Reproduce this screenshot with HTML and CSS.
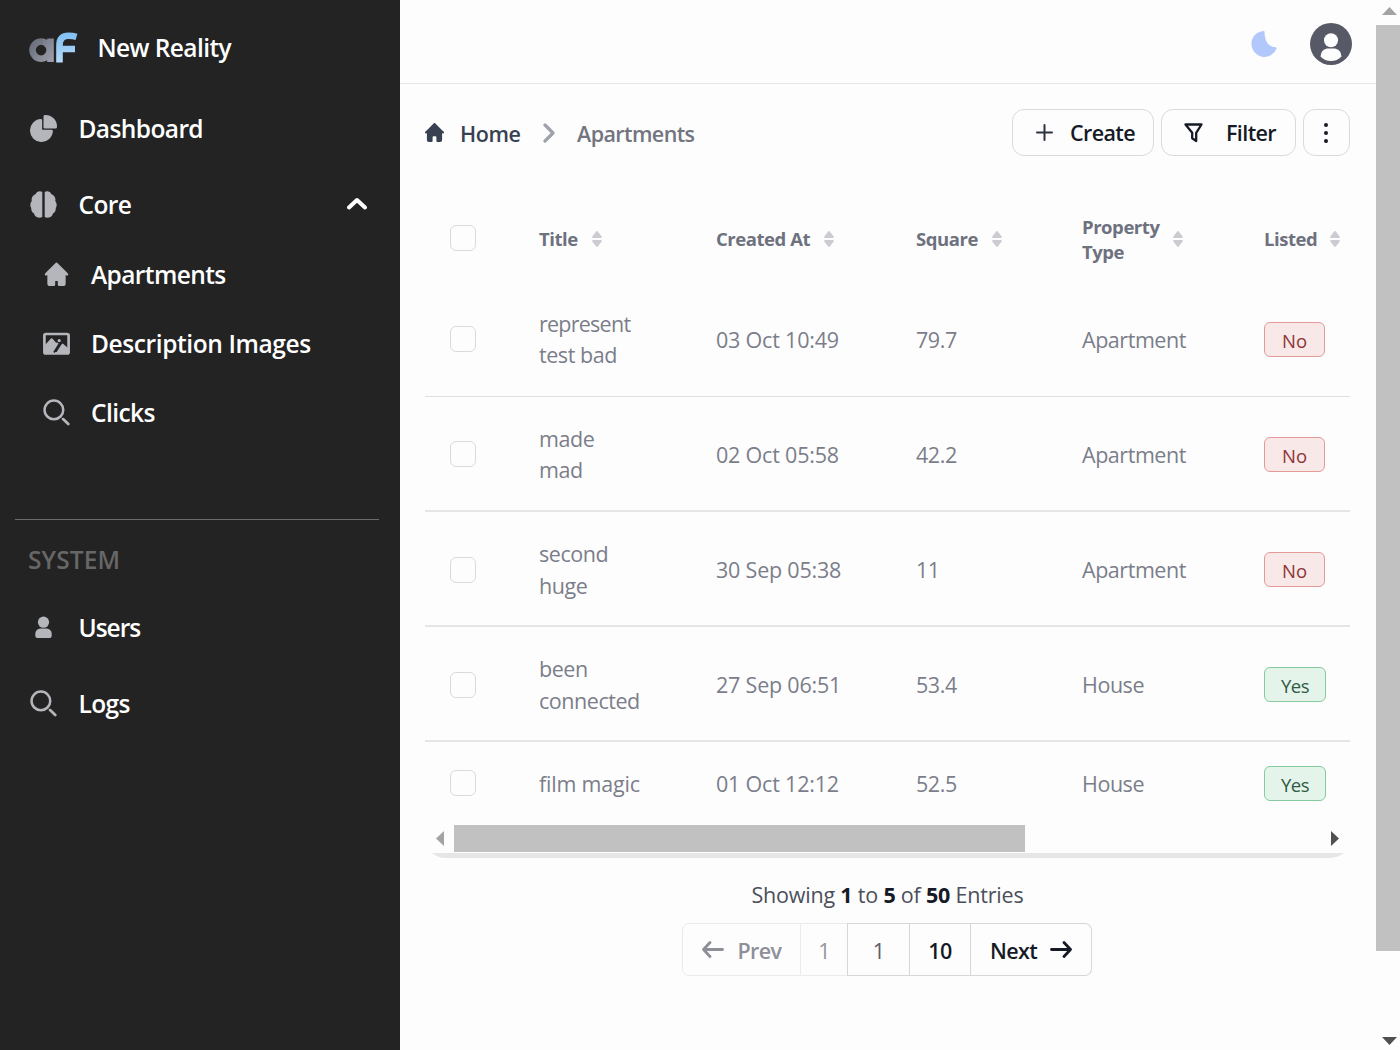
FILE: index.html
```html
<!DOCTYPE html>
<html lang="en">
<head>
<meta charset="utf-8">
<title>Apartments</title>
<link rel="stylesheet" href="styles.css">
</head>
<body>
<svg class="sprite" width="0" height="0">
  <symbol id="search" viewBox="0 0 28 28"><circle cx="11.3" cy="11.3" r="9.7" fill="none" stroke="currentColor" stroke-width="2.600"/><path d="M20.8 20.8l5.4 5.2" stroke="currentColor" stroke-width="2.800" stroke-linecap="round"/></symbol>
  <symbol id="home" viewBox="0 0 20 20"><path fill="currentColor" d="m19.707 9.293-2-2-7-7a1 1 0 0 0-1.414 0l-7 7-2 2a1 1 0 0 0 1.414 1.414L2 10.414V18a2 2 0 0 0 2 2h3a1 1 0 0 0 1-1v-4a1 1 0 0 1 1-1h2a1 1 0 0 1 1 1v4a1 1 0 0 0 1 1h3a2 2 0 0 0 2-2v-7.586l.293.293a1 1 0 0 0 1.414-1.414Z"/></symbol>
  <symbol id="sort" viewBox="0 0 10 16"><path fill="currentColor" d="M1 7a.9.9 0 0 1-.7-1.4L4.2.5a1 1 0 0 1 1.6 0l3.9 5.1A.9.9 0 0 1 9 7ZM1 9h8a.9.9 0 0 1 .7 1.4l-3.9 5.1a1 1 0 0 1-1.6 0L.3 10.400A.9.9 0 0 1 1 9Z"/></symbol>
</svg>
<div class="app">
  <aside class="sidebar">
    <div class="brand">
      <svg class="logo" width="50" height="32" viewBox="0 0 50 32">
        <defs>
          <linearGradient id="gray" x1="0" y1="0" x2="1" y2="1"><stop offset="0" stop-color="#676c7b"/><stop offset="1" stop-color="#9a9ca8"/></linearGradient>
          <linearGradient id="blue" x1="0" y1="0" x2="0" y2="1"><stop offset="0" stop-color="#85c1f3"/><stop offset="1" stop-color="#b5dbf8"/></linearGradient>
        </defs>
        <path d="M13 10.500a8.500 8.600 0 1 0 .1 0M22.500 7.500v23.500" fill="none" stroke="url(#gray)" stroke-width="6.600"/>
        <path d="M31.500 31.500V14Q31.500 4.800 40.500 4.800Q45 4.800 48.500 5.800M31.500 18H47" fill="none" stroke="url(#blue)" stroke-width="6.600"/>
      </svg>
      <span>New Reality</span>
    </div>
    <nav>
      <a class="item"><svg class="ico" viewBox="2 2 20 20"><path fill="currentColor" d="M13.500 2c-.178 0-.356.013-.492.022l-.074.005a1 1 0 0 0-.934.998V11a1 1 0 0 0 1 1h7.975a1 1 0 0 0 .998-.934l.005-.074A7.040 7.040 0 0 0 22 10.500 8.500 8.500 0 0 0 13.500 2ZM11 6.025a1 1 0 0 0-1.065-.998 8.500 8.500 0 1 0 9.038 9.039A1 1 0 0 0 17.975 13H11V6.025Z"/></svg><span>Dashboard</span></a>
      <a class="item"><svg class="ico" viewBox="0 0 27 27"><path fill="currentColor" d="M12.300 1Q11 .2 9.500.3Q6.500.6 5.700 3Q3.300 3.800 2.200 6Q1.200 8 1.700 10Q.2 12 .3 14Q.4 16 1.200 17Q1 20.500 4 22.500Q5 26.500 9 26.700Q11 26.800 12.300 26ZM14.700 1Q16 .2 17.500.3Q20.500.6 21.300 3Q23.700 3.800 24.800 6Q25.800 8 25.300 10Q26.800 12 26.700 14Q26.600 16 25.800 17Q26 20.500 23 22.500Q22 26.500 18 26.700Q16 26.800 14.700 26Z"/></svg><span>Core</span>
        <svg class="caret" width="20" height="13" viewBox="0 0 20 13"><path d="M2 10.500 10 3l8 7.500" fill="none" stroke="#fff" stroke-width="4" stroke-linecap="round" stroke-linejoin="round"/></svg></a>
      <div class="sub">
        <a class="item"><svg class="ico" viewBox="2.700 2.300 18.600 18.600"><path fill="currentColor" d="M11.293 3.293a1 1 0 0 1 1.414 0l6 6 2 2a1 1 0 0 1-1.414 1.414L19 12.414V19a2 2 0 0 1-2 2h-3a1 1 0 0 1-1-1v-3h-2v3a1 1 0 0 1-1 1H7a2 2 0 0 1-2-2v-6.586l-.293.293a1 1 0 0 1-1.414-1.414l2-2 6-6Z" transform="translate(1.200 .700) scale(.9)"/></svg><span>Apartments</span></a>
        <a class="item"><svg class="ico" viewBox="0 0 27 27"><rect x="1.400" y="4" width="24.200" height="19.400" rx="1.500" fill="none" stroke="currentColor" stroke-width="2.700"/><path fill="currentColor" d="M2 15 8.200 8.300Q9 8 9.600 8.700L13.500 13.300 9.800 23H2ZM13 23 18.600 14.300 19.800 13.500 25 18V23Z"/><path d="M9 23 15 13" stroke="currentColor" stroke-width="3"/><circle cx="16.200" cy="10.600" r="1.600" fill="currentColor"/><path d="M11 22.500 16.700 13.200" stroke="#232323" stroke-width="1.800"/></svg><span class="desc">Description Images</span></a>
        <a class="item"><svg class="ico"><use href="#search"/></svg><span>Clicks</span></a>
      </div>
    </nav>
    <div class="system">SYSTEM</div>
    <nav>
      <a class="item"><svg class="ico" viewBox="0 0 27 27"><circle cx="13.500" cy="8.200" r="5.600" fill="currentColor"/><path fill="currentColor" d="M10.500 14.500h6Q21.700 15 21.700 20v2q0 2-2 2H7.300q-2 0-2-2v-2q0-5 5.200-5.500Z"/></svg><span class="tight">Users</span></a>
      <a class="item"><svg class="ico"><use href="#search"/></svg><span>Logs</span></a>
    </nav>
  </aside>

  <main class="main">
    <header class="topbar">
      <svg width="26" height="26" viewBox="0 0 26 26"><path fill="#b2c8fa" d="M12.300 0Q13.600-.1 13.600 1.300C13.600 11 18 16 24.600 16.200Q26 16.400 25.600 17.500A13 13 0 1 1 12.300 0Z"/></svg>
      <svg width="42" height="42" viewBox="0 0 42 42"><circle cx="21" cy="21" r="21" fill="#575966"/><circle cx="21" cy="17.200" r="7" fill="#fdfdfd"/><path fill="#fdfdfd" d="M17 25.500h8Q31 26.500 31.500 33.500Q27 38 21 38T10.500 33.500Q11 26.500 17 25.500Z"/></svg>
    </header>

    <section class="content">
      <div class="toolbar">
        <div class="crumbs">
          <svg width="19" height="19"><use href="#home"/></svg>
          <span class="home">Home</span>
          <svg width="12" height="20" viewBox="0 0 12 20"><path d="M2 2l8 8-8 8" fill="none" stroke="#9fa2ad" stroke-width="3.200" stroke-linecap="round" stroke-linejoin="round"/></svg>
          <span class="here">Apartments</span>
        </div>
        <div class="actions">
          <button class="btn create"><svg width="17" height="17" viewBox="0 0 17 17"><path d="M8.500 1v15M1 8.500h15" stroke="#2d3340" stroke-width="2" stroke-linecap="round"/></svg><span>Create</span></button>
          <button class="btn filter"><svg width="19" height="20" viewBox="0 0 19 20"><path d="M1.500 1.500h16l-5.300 8.300v8.200l-4-2.700V9.800Z" fill="none" stroke="#161a26" stroke-width="2.300" stroke-linejoin="round"/></svg><span>Filter</span></button>
          <button class="btn more"><svg width="4" height="20" viewBox="0 0 4 20"><path d="M2 2v.01M2 10v.01M2 18v.01" stroke="#161a26" stroke-width="4" stroke-linecap="round"/></svg></button>
        </div>
      </div>

      <table class="grid">
        <colgroup><col class="c1"><col class="c2"><col class="c3"><col class="c4"><col class="c5"><col class="c6"></colgroup>
        <thead><tr>
          <th><i class="check"></i></th>
          <th><div class="h">Title<svg><use href="#sort"/></svg></div></th>
          <th><div class="h">Created At<svg><use href="#sort"/></svg></div></th>
          <th><div class="h">Square<svg><use href="#sort"/></svg></div></th>
          <th><div class="h">Property<br>Type<svg><use href="#sort"/></svg></div></th>
          <th><div class="h listed">Listed<svg><use href="#sort"/></svg></div></th>
        </tr></thead>
        <tbody>
          <tr class="top"><td><i class="check"></i></td><td><span class="tighter">represent</span><br>test bad</td><td class="date">03 Oct 10:49</td><td>79.7</td><td>Apartment</td><td><span class="tag no">No</span></td></tr>
          <tr><td><i class="check"></i></td><td>made<br>mad</td><td class="date">02 Oct 05:58</td><td>42.2</td><td>Apartment</td><td><span class="tag no">No</span></td></tr>
          <tr><td><i class="check"></i></td><td>second<br>huge</td><td class="date">30 Sep 05:38</td><td>11</td><td>Apartment</td><td><span class="tag no">No</span></td></tr>
          <tr><td><i class="check"></i></td><td>been<br>connected</td><td class="date">27 Sep 06:51</td><td>53.4</td><td>House</td><td><span class="tag yes">Yes</span></td></tr>
          <tr class="last"><td><i class="check"></i></td><td class="date">film magic</td><td class="date">01 Oct 12:12</td><td>52.5</td><td>House</td><td><span class="tag yes">Yes</span></td></tr>
        </tbody>
      </table>
      <div class="hscroll">
        <svg width="8" height="15" viewBox="0 0 8 15"><path fill="#a3a3a6" d="M8 0v15L0 7.500Z"/></svg>
        <div class="hthumb"></div>
        <svg width="8" height="15" viewBox="0 0 8 15"><path fill="#505050" d="M0 0v15l8-7.500Z"/></svg>
      </div>
      <svg class="edge" width="912" height="5" viewBox="0 0 912 5"><path fill="#e6e6e6" d="M0 0H912Q906 5 896 5H14Q6 5 0 0Z"/></svg>

      <div class="summary">Showing <b>1</b> to <b>5</b> of <b>50</b> Entries</div>
      <div class="pager">
        <div class="pg prev"><svg width="22" height="17" viewBox="0 0 22 17"><path d="M20.500 8.500h-19m6.500-7-6.500 7 6.500 7" fill="none" stroke="currentColor" stroke-width="2.800" stroke-linecap="round" stroke-linejoin="round"/></svg><span>Prev</span></div>
        <div class="pg first">1</div>
        <div class="pg current">1</div>
        <div class="pg ten">10</div>
        <div class="pg next"><span>Next</span><svg width="22" height="17" viewBox="0 0 22 17"><path d="M1.500 8.500h19m-6.500-7 6.500 7-6.500 7" fill="none" stroke="currentColor" stroke-width="2.800" stroke-linecap="round" stroke-linejoin="round"/></svg></div>
      </div>
    </section>
  </main>

  <div class="vscroll">
    <svg width="15" height="8" viewBox="0 0 15 8"><path fill="#a3a3a6" d="M0 8h15L7.500 0Z"/></svg>
    <div class="vthumb"></div>
    <svg width="15" height="8" viewBox="0 0 15 8"><path fill="#505050" d="M0 0h15L7.500 8Z"/></svg>
  </div>
</div>
</body>
</html>
```
FILE: styles.css
```css
* { box-sizing: border-box; }
body { margin: 0; overflow: hidden; background: #fdfdfd; font-family: "Open Sans", "Noto Sans", sans-serif; }
svg { flex: none; display: block; }
.sprite { position: absolute; }
.app { display: flex; width: 1400px; height: 1050px; }

.sidebar { width: 400px; background: #232323; color: #fff; padding-top: 17px; font-size: 24.500px; font-weight: 600; letter-spacing: -0.6px; }
.brand { display: flex; align-items: center; height: 60px; padding-left: 28px; gap: 19.500px; }
.sidebar nav { padding-left: 30px; }
.item { display: flex; align-items: center; height: 50px; gap: 21.500px; margin-bottom: 26px; }
.item > span { padding-top: 1px; }
.sidebar .brand + nav { padding-top: 26px; }
.ico { width: 27px; height: 27px; color: #b5b6bb; }
.caret { margin-left: auto; margin-right: 33px; margin-bottom: 1px; }
.sub { padding-left: 13px; margin-top: -6px; }
.sub .item { gap: 21px; margin-bottom: 19px; }
.sub .item > span { padding-top: 0; }
.desc { letter-spacing: -0.4px; }
.item > .tight { letter-spacing: -1px; }
.system { margin: 82px 21px 0 15px; padding: 15px 13px 0; height: 83px; border-top: 1px solid #6b6b6b; color: #676767; line-height: 50px; letter-spacing: 0.1px; }

.main { width: 976px; }
.topbar { display: flex; justify-content: flex-end; align-items: center; gap: 33px; height: 84px; padding: 4px 24.500px 0 0; border-bottom: 1px solid #e5e6e8; }
.content { padding: 25px 26px 0 25px; }
.toolbar { display: flex; justify-content: space-between; height: 47px; }
.crumbs { display: flex; align-items: center; font-size: 21.500px; font-weight: 600; }
.crumbs svg { color: #374151; }
.crumbs span { padding-top: 1px; }
.home { margin: 0 22px 0 16px; color: #374151; letter-spacing: -0.4px; }
.here { margin-left: 22.500px; color: #72757f; letter-spacing: -0.6px; }
.actions { display: flex; gap: 7px; }
.btn { display: flex; align-items: center; height: 47px; padding: 0; border: 1px solid #d9dade; border-radius: 12px; background: #fdfdfd; color: #161a26; font: 600 21.500px "Open Sans", sans-serif; letter-spacing: -0.6px; }
.create { width: 142px; padding-left: 23px; gap: 17px; }
.filter { width: 135px; padding-left: 22px; gap: 23px; }
.more { width: 47px; justify-content: center; padding-right: 1px; }

.grid { width: 925px; table-layout: fixed; border-collapse: collapse; margin-top: 39px; color: #7b7e8a; font-size: 21.500px; line-height: 31.500px; letter-spacing: -0.45px; }
.c1 { width: 89px; } .c2 { width: 177px; } .c3 { width: 200px; } .c4 { width: 166px; } .c5 { width: 182px; } .c6 { width: 111px; }
.grid th, .grid td { padding: 0 0 0 25px; text-align: left; vertical-align: middle; white-space: nowrap; }
.grid td { padding-top: 2px; }
.grid thead tr { height: 86px; font-size: 18.500px; line-height: 25px; color: #6e717e; }
.grid tbody tr { height: 115px; border-bottom: 2px solid #e4e5e6; }
.grid tbody tr.top { border-bottom: 1px solid #dfe0e2; }
.grid tbody tr.last { height: 84px; border: 0; }
.grid tr.last td { padding-top: 0; }
.grid .date { letter-spacing: -0.2px; }
.tighter { letter-spacing: -0.75px; }
.h { display: flex; align-items: center; gap: 14px; padding-top: 1px; }
.h.listed { gap: 12.500px; }
.h svg { width: 10px; height: 16px; color: #cbccd1; }
.check { display: block; width: 26px; height: 26px; border: 1px solid #d9dade; border-radius: 6px; }
.grid tr.last .check { margin-bottom: 1px; }
.tag { display: flex; align-items: center; justify-content: center; height: 35px; padding-top: 2px; border: 1px solid; border-radius: 6px; font-size: 18.500px; font-weight: 500; letter-spacing: 0; }
.no { width: 61px; background: #f8e8e8; border-color: #e59a9a; color: #8f3535; }
.yes { width: 62px; background: #e5f4ea; border-color: #86cb9f; color: #2f5b42; letter-spacing: -0.5px; }

.hscroll { display: flex; align-items: center; height: 27px; padding: 0 11px; }
.hthumb { width: 571px; height: 27px; margin: 0 auto 0 10px; background: #c1c1c1; }
.edge { margin: 1px 0 0 7px; }
.summary { margin-top: 21px; text-align: center; font-size: 21.500px; line-height: 32px; letter-spacing: -0.2px; color: #4b4f5b; }
.summary b { color: #161a26; }
.pager { display: flex; width: 410px; height: 53px; margin: 12px 0 0 257px; color: #161a26; font-size: 21.500px; font-weight: 600; letter-spacing: -0.6px; }
.pg { display: flex; align-items: center; justify-content: center; border: 1px solid #d5d7db; border-left-width: 0; padding-top: 1px; }
.pg svg { margin-bottom: 2px; }
.prev { width: 119px; gap: 14px; border-left-width: 1px; border-radius: 7px 0 0 7px; color: #8d9099; border-color: #e9ebee; }
.first { width: 46px; color: #9497a0; font-weight: 500; border-color: #e9ebee; border-right-width: 0; }
.current { width: 63px; border-left-width: 1px; color: #5b5e68; font-weight: 500; }
.ten { width: 61px; }
.next { width: 121px; gap: 13px; border-radius: 0 7px 7px 0; }

.vscroll { width: 24px; display: flex; flex-direction: column; align-items: center; padding: 7px 0 5px 2px; }
.vthumb { width: 24px; height: 926px; margin: 10px 0 auto -2px; background: #c1c1c1; }
```
